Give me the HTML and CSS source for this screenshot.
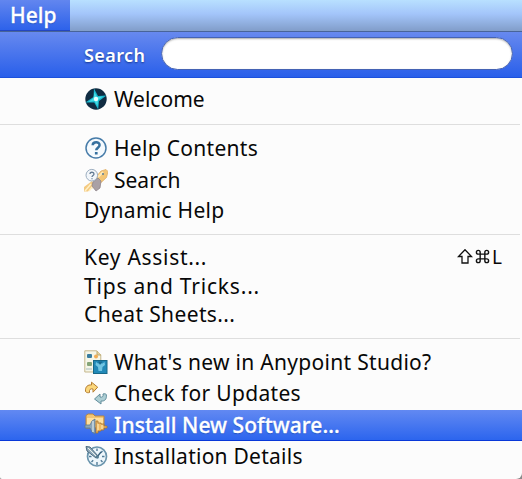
FILE: index.html
```html
<!DOCTYPE html>
<html lang="en">
<head>
<meta charset="utf-8">
<title>Help menu</title>
<link rel="stylesheet" href="styles.css">
</head>
<body>
<header class="menubar"><span class="menubar-item">Help</span></header>
<main class="menu">
  <label class="search"><span class="search-label">Search</span><input class="search-field" type="text"></label>
  <ul class="items">
    <li class="item">
      <svg class="icon" viewBox="0 0 24 24"><circle cx="12" cy="12" r="10.700" fill="#102c42"/><path d="M10 1.500 14 9l8.500-.5-7.500 5.500-.8 8.500-4-7L1.300 15.500 9.500 10z" fill="#18b5cc"/><path d="M10.500 5l2.500 5 6-.5-5 3.500-.5 6-3-5-6 1 5-4z" fill="#43dce5"/><circle cx="12" cy="12" r="2.200" fill="#e5ffff"/></svg>
      <span>Welcome</span></li>
    <li class="separator"></li>
    <li class="item raised">
      <svg class="icon" viewBox="0 0 24 24"><circle cx="12" cy="12" r="10" fill="#f5fafe" stroke="#477ca9" stroke-width="1.500"/><path d="M8.700 9.200c.2-4 7-4 6.900-.1 0 2.500-3.400 2.700-3.400 5.200" fill="none" stroke="#36709f" stroke-width="2.500"/><rect x="10.900" y="16" width="2.700" height="2.500" fill="#36709f"/></svg>
      <span class="t-contents">Help Contents</span></li>
    <li class="item">
      <svg class="icon" viewBox="0 0 24 24"><path d="M0 19 8 13l5 5-6 3-3 2.500H0z" fill="#f4c980"/><path d="M1 23l6-7M5 23l4-5" stroke="#fff0c5" stroke-width="1.500"/><path d="M12 9l5-6 5-1.500 2 2-1.500 6-6.500 6z" fill="#f4c675" stroke="#dfad68" stroke-width=".8"/><path d="M14 9l5-5" stroke="#ffe9b5" stroke-width="2"/><path d="M9 14l5-4 3 3-1 7-4 3-4-5z" fill="#aaa1a5" stroke="#91878c" stroke-width=".8"/><circle cx="19" cy="6" r="1" fill="#597c98"/><circle cx="7.800" cy="7.200" r="5.800" fill="#f2f6fa" stroke="#9caec0"/><path d="M6 6c0-2.500 4-2.200 4 0 0 1.500-2 1.500-2 3M8 10.300v1" fill="none" stroke="#637b93" stroke-width="1.300"/></svg>
      <span>Search</span></li>
    <li class="item plain"><span class="t-dynamic">Dynamic Help</span></li>
    <li class="separator"></li>
    <li class="item plain raised"><span class="t-key">Key Assist...</span>
      <span class="shortcut"><svg class="shift" viewBox="0 0 16 16"><path d="M8 1.200 14.500 8H11v6.500H5V8H1.500z" fill="none" stroke="#111" stroke-width="1.300"/></svg><svg class="command" viewBox="0 0 16 16"><path d="M5.500 5.500h5v5h-5zM5.500 5.500h-2a2 2 0 1 1 2-2zM10.500 5.500v-2a2 2 0 1 1 2 2zM10.500 10.500h2a2 2 0 1 1-2 2zM5.500 10.500v2a2 2 0 1 1-2-2z" fill="none" stroke="#111" stroke-width="1.500"/></svg><span>L</span></span></li>
    <li class="item plain short"><span class="t-tips">Tips and Tricks...</span></li>
    <li class="item plain short"><span class="t-cheat">Cheat Sheets...</span></li>
    <li class="separator"></li>
    <li class="item raised">
      <svg class="icon" viewBox="0 0 24 24"><path d="M.8.800h12l4 4V22h-16z" fill="#f5f6e8" stroke="#c5b78c"/><path d="M13 1v4h4" fill="#e5d2a0" stroke="#bda96f"/><rect x="3" y="4" width="5" height="4" rx="1" fill="#397da0"/><circle cx="12" cy="6.500" r="2" fill="#f1ad55"/><rect x="3" y="12" width="5" height="4" rx="1" fill="#85a477"/><path d="M2 19h6" stroke="#a8bcbe"/><rect x="9.500" y="10.500" width="13.500" height="13" fill="#2189b7" stroke="#176888"/><path d="M12 12l2 1.500h4.500l2-1.500.5 3-2.500 2-.5 4h-3.500l-.5-4-2.500-2z" fill="#70c5e3"/><path d="M14 11.500l2 3.500 2.500-3.500z" fill="#17678d"/></svg>
      <span class="t-whats">What's new in Anypoint Studio?</span></li>
    <li class="item check raised">
      <svg class="icon" viewBox="0 0 24 24"><path d="M1.500 10.500C1 5.500 4 3.500 7.500 4V1.200l6.200 5-4.700 5V8C6.500 7.300 5 8.500 5.500 11.500c-1.500.5-3 .2-4-1z" fill="#fbd77c" stroke="#b57d31"/><path d="M22.300 13.500c.8 5-2 7-5.300 6.500v3l-6.500-5 5.500-5v3c2.500.6 3.500-.5 3-3 1.500-.5 2.600-.2 3.300.5z" fill="#adced4" stroke="#618c9b"/></svg>
      <span class="t-check">Check for Updates</span></li>
    <li class="item selected">
      <svg class="icon" viewBox="0 0 24 24"><path d="M2 15V2.500L4 1h5l2 2h9v12z" fill="#f3c674" stroke="#b9853e"/><path d="M3 5h16v9H3z" fill="#ffe0a0"/><path d="M1 12h5l2-4 3-2v15l-3-2-2-4H1z" fill="#8ca5b7" stroke="#5c7890" stroke-width=".8"/><path d="M9 8v11" stroke="#c8dae1" stroke-width="1.500"/><path d="M12 8h2v2h3v1h3v2h3v2h-3v2h-3v1h-3v2h-2z" fill="#f0ba64" stroke="#a8752f" stroke-width=".8"/><path d="M14 11v6M18 12v4" stroke="#fff0c0"/></svg>
      <span class="t-install">Install New Software...</span></li>
    <li class="item raised">
      <svg class="icon" viewBox="0 0 24 24"><circle cx="13" cy="12.500" r="9.500" fill="#edf6fb" stroke="#6b95ad" stroke-width="1.700"/><path d="M13 4.500V7M13 18v3M20.500 12.500H18M5 12.500h2.500M18.500 7l-1.700 1.700M18.500 18l-1.700-1.700M7.500 18l1.700-1.700" stroke="#527b97" stroke-width="1.400"/><path d="M13 13l4-5" stroke="#365e7a" stroke-width="1.300"/><path d="M2 2.500l4 .5 8 9-2 2-9-7z" fill="#91aabb" stroke="#4b697d"/><path d="M4 4l9 9" stroke="#eef2eb"/><circle cx="13.300" cy="13" r="1.700" fill="#567d92"/></svg>
      <span class="t-details">Installation Details</span></li>
  </ul>
</main>
</body>
</html>
```
FILE: styles.css
```css
* { box-sizing: border-box; }
body { margin: 0; width: 522px; height: 479px; overflow: hidden; background: #8a8a8a; font: 21px/28px "Noto Sans", sans-serif; color: #080808; }
.menubar { height: 31px; background: linear-gradient(#b8e0ff, #a3c5fa 45%, #819dc9); display: flex; }
.menubar-item { width: 70px; padding-left: 10px; color: #fff; font-weight: 500; line-height: 31px; -webkit-text-stroke: .3px #fff; background: linear-gradient(#6286ef, #2d62ea); border-bottom: 1px solid #2346c0; text-shadow: 0 1px 1px #2454bd; }
.menu { height: 448px; background: #fcfcfc; border-radius: 0 0 6px 2px; overflow: hidden; }
.search { display: flex; align-items: center; height: 47px; padding: 0 9px 2px 84px; background: linear-gradient(#6789ef, #295fea); border-top: 1px solid #486499; border-bottom: 1px solid #1c51dc; }
.search-label { width: 77px; color: #fff; font-size: 18px; font-weight: 600; letter-spacing: .4px; text-shadow: 0 1px 2px #173890; padding-top: 3px; }
.search-field { flex: 1; min-width: 0; height: 33px; border: 1px solid #4563b4; border-radius: 17px; background: #fff; padding: 0 14px; outline: 0; box-shadow: inset 0 1px 2px #aaa; }
.items { margin: 0; padding: 5px 0 0; list-style: none; }
.item { display: flex; align-items: center; height: 31px; padding-left: 84px; white-space: pre; }
.item.plain { height: 29px; }
.item.short { height: 28px; }
.item.check { height: 32px; }
.item.raised { padding-bottom: 2px; }
.icon { width: 24px; height: 24px; margin-right: 6px; flex: none; }
.separator { height: 19px; padding-top: 10px; }
.separator::before { content: ""; display: block; height: 1px; width: 520px; background: #dedede; }
.selected { color: #fff; font-weight: 500; background: linear-gradient(#6289f2, #2c65ee); border-bottom: 1px solid #0837d8; text-shadow: 0 1px 1px #2454c0; -webkit-text-stroke: .3px #fff; }
.shortcut { display: flex; align-items: center; margin: 0 20px 0 auto; font-size: 19px; }
.shift { width: 16px; height: 17px; margin-right: 2px; }
.command { width: 15px; height: 17px; margin-right: 2px; }
.t-contents { letter-spacing: .3px; }
.t-dynamic { letter-spacing: .27px; }
.t-key { letter-spacing: .7px; }
.t-tips { letter-spacing: .8px; }
.t-cheat { letter-spacing: .38px; }
.t-whats { letter-spacing: .3px; }
.t-check { letter-spacing: .33px; }
.t-install { letter-spacing: .05px; }
.t-details { letter-spacing: .25px; }
```
